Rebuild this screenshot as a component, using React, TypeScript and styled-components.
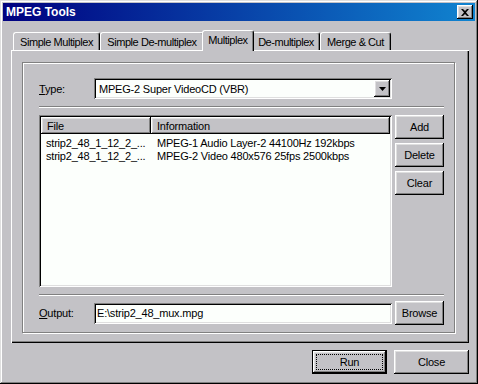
import React from 'react'
import styled, { createGlobalStyle } from 'styled-components'

const FACE = '#c3c2c6'

const GlobalStyle = createGlobalStyle`
  html, body {
    margin: 0;
    padding: 0;
    background: ${FACE};
  }
  body {
    font-family: "Liberation Sans", Arial, sans-serif;
    font-size: 11px;
    letter-spacing: -0.2px;
    color: #000;
  }
`

const raised = `
  box-shadow: inset -1px -1px #000, inset 1px 1px #fff, inset -2px -2px #808080, inset 2px 2px #dfdfdf;
`

const sunken = `
  box-shadow: inset 1px 1px #808080, inset -1px -1px #fff, inset 2px 2px #000, inset -2px -2px #dfdfdf;
`

const Window = styled.div`
  width: 478px;
  height: 384px;
  box-sizing: border-box;
  padding: 3px;
  background: ${FACE};
  box-shadow: inset -1px -1px #000, inset 1px 1px #dfdfdf, inset -2px -2px #808080, inset 2px 2px #fff;
  display: flex;
  flex-direction: column;
`

const TitleBar = styled.div`
  height: 18px;
  display: flex;
  align-items: center;
  justify-content: space-between;
  padding: 0 2px 0 3px;
  background: linear-gradient(90deg, #000080, #1084d0);
  color: #fff;
  font-weight: bold;
  font-size: 12px;
  letter-spacing: 0;
`

const CloseBox = styled.div`
  width: 16px;
  height: 14px;
  box-sizing: border-box;
  background: ${FACE};
  ${raised}
  display: flex;
  align-items: center;
  justify-content: center;
  padding-right: 1px;
`

const Body = styled.div`
  flex: 1;
  display: flex;
  flex-direction: column;
  padding: 9px 6px 7px 8px;
`

const TabRow = styled.div`
  height: 20px;
  display: flex;
  align-items: flex-end;
  padding-left: 2px;
`

const Tab = styled.div<{ $active?: boolean; $w: number }>`
  box-sizing: border-box;
  width: ${p => p.$w}px;
  height: ${p => (p.$active ? 21 : 18)}px;
  margin: ${p => (p.$active ? '0 -2px -1px' : '0')};
  position: relative;
  z-index: ${p => (p.$active ? 2 : 1)};
  background: ${FACE};
  border-top: 1px solid #fff;
  border-left: 1px solid #fff;
  border-right: 1px solid #000;
  border-radius: 3px 3px 0 0;
  box-shadow: inset -1px 0 #808080;
  display: flex;
  align-items: center;
  justify-content: center;
  padding-bottom: ${p => (p.$active ? 2 : 0)}px;
  white-space: nowrap;
  letter-spacing: -0.45px;
`

const Panel = styled.div`
  height: 293px;
  box-sizing: border-box;
  padding: 12px 14px 10px 11px;
  background: ${FACE};
  box-shadow: inset 1px 1px #fff, inset -1px -1px #000, inset -2px -2px #808080;
  display: flex;
  flex-direction: column;
`

const GroupBox = styled.div`
  flex: 1;
  border: 1px solid #808080;
  box-shadow: 1px 1px 0 #fff, inset 1px 1px 0 #fff;
  padding: 15px 10px 7px 16px;
  display: flex;
  flex-direction: column;
`

const FieldRow = styled.div<{ $h: number; $mt?: number }>`
  height: ${p => p.$h}px;
  margin-top: ${p => p.$mt ?? 0}px;
  display: flex;
  align-items: center;
`

const Label = styled.div`
  width: 55px;
  flex: none;
`

const Combo = styled.div`
  width: 298px;
  height: 21px;
  box-sizing: border-box;
  padding: 2px;
  background: #fcfffc;
  ${sunken}
  display: flex;
  align-items: center;
`

const ComboText = styled.div`
  flex: 1;
  padding-left: 3px;
`

const DropButton = styled.div`
  width: 16px;
  height: 17px;
  box-sizing: border-box;
  background: ${FACE};
  ${raised}
  display: flex;
  align-items: center;
  justify-content: center;
`

const Edit = styled.div`
  width: 298px;
  height: 21px;
  box-sizing: border-box;
  padding: 0 3px;
  background: #fcfffc;
  ${sunken}
  display: flex;
  align-items: center;
`

const Separator = styled.div<{ $mt: number }>`
  height: 2px;
  box-sizing: border-box;
  margin-top: ${p => p.$mt}px;
  border-top: 1px solid #808080;
  border-bottom: 1px solid #fff;
`

const ListRow = styled.div`
  margin-top: 7px;
  height: 172px;
  display: flex;
  gap: 3px;
`

const ListView = styled.div`
  width: 353px;
  box-sizing: border-box;
  padding: 2px;
  background: #fcfffc;
  ${sunken}
  display: flex;
  flex-direction: column;
`

const Header = styled.div`
  height: 17px;
  display: flex;
`

const HeaderCell = styled.div<{ $w?: number }>`
  box-sizing: border-box;
  ${p => (p.$w ? `width: ${p.$w}px;` : 'flex: 1;')}
  background: ${FACE};
  ${raised}
  padding-left: 6px;
  display: flex;
  align-items: center;
`

const Rows = styled.div`
  padding-top: 2px;
`

const ItemRow = styled.div`
  height: 13px;
  display: flex;
  align-items: center;
`

const Cell = styled.div<{ $w?: number; $pl: number }>`
  ${p => (p.$w ? `width: ${p.$w}px;` : 'flex: 1;')}
  box-sizing: border-box;
  padding-left: ${p => p.$pl}px;
  white-space: nowrap;
  overflow: hidden;
`

const ButtonColumn = styled.div`
  width: 49px;
  display: flex;
  flex-direction: column;
  gap: 4px;
`

const Button = styled.button<{ $w?: number; $default?: boolean; $ml?: number }>`
  width: ${p => p.$w ?? 49}px;
  height: 24px;
  flex: none;
  box-sizing: border-box;
  margin: 0 0 0 ${p => p.$ml ?? 0}px;
  padding: ${p => (p.$default ? '3px' : '0')};
  font: inherit;
  letter-spacing: inherit;
  color: #000;
  background: ${FACE};
  border: ${p => (p.$default ? '1px solid #000' : 'none')};
  ${raised}
  display: flex;
  align-items: center;
  justify-content: center;
`

const FocusRect = styled.span`
  flex: 1;
  align-self: stretch;
  border: 1px dotted #000;
  display: flex;
  align-items: center;
  justify-content: center;
`

const Footer = styled.div`
  margin-top: 7px;
  display: flex;
  justify-content: flex-end;
  gap: 7px;
`

const tabs = [
  { label: 'Simple Multiplex', w: 87 },
  { label: 'Simple De-multiplex', w: 104 },
  { label: 'Multiplex', w: 52, active: true },
  { label: 'De-multiplex', w: 68 },
  { label: 'Merge & Cut', w: 71 },
]

const items = [
  { file: 'strip2_48_1_12_2_...', info: 'MPEG-1 Audio Layer-2 44100Hz 192kbps' },
  { file: 'strip2_48_1_12_2_...', info: 'MPEG-2 Video 480x576 25fps 2500kbps' },
]

export default function App() {
  return (
    <>
      <GlobalStyle />
      <Window>
        <TitleBar>
          <span>MPEG Tools</span>
          <CloseBox>
            <svg width="8" height="7" viewBox="0 0 8 7">
              <path d="M0 0h2l2 2 2-2h2L5 3.5 8 7H6L4 5 2 7H0l3-3.5z" fill="#000" />
            </svg>
          </CloseBox>
        </TitleBar>
        <Body>
          <TabRow>
            {tabs.map(t => (
              <Tab key={t.label} $w={t.w} $active={t.active}>
                {t.label}
              </Tab>
            ))}
          </TabRow>
          <Panel>
            <GroupBox>
              <FieldRow $h={21}>
                <Label>
                  <u>T</u>ype:
                </Label>
                <Combo>
                  <ComboText>MPEG-2 Super VideoCD (VBR)</ComboText>
                  <DropButton>
                    <svg width="7" height="4" viewBox="0 0 7 4">
                      <path d="M0 0h7L3.5 4z" fill="#000" />
                    </svg>
                  </DropButton>
                </Combo>
              </FieldRow>
              <Separator $mt={7} />
              <ListRow>
                <ListView>
                  <Header>
                    <HeaderCell $w={110}>File</HeaderCell>
                    <HeaderCell>Information</HeaderCell>
                  </Header>
                  <Rows>
                    {items.map((it, i) => (
                      <ItemRow key={i}>
                        <Cell $w={110} $pl={5}>{it.file}</Cell>
                        <Cell $pl={6}>{it.info}</Cell>
                      </ItemRow>
                    ))}
                  </Rows>
                </ListView>
                <ButtonColumn>
                  <Button>Add</Button>
                  <Button>Delete</Button>
                  <Button>Clear</Button>
                </ButtonColumn>
              </ListRow>
              <Separator $mt={7} />
              <FieldRow $h={24} $mt={5}>
                <Label>
                  <u>O</u>utput:
                </Label>
                <Edit>E:\strip2_48_mux.mpg</Edit>
                <Button $ml={3}>Browse</Button>
              </FieldRow>
            </GroupBox>
          </Panel>
          <Footer>
            <Button $w={75} $default>
              <FocusRect>Run</FocusRect>
            </Button>
            <Button $w={75}>Close</Button>
          </Footer>
        </Body>
      </Window>
    </>
  )
}
